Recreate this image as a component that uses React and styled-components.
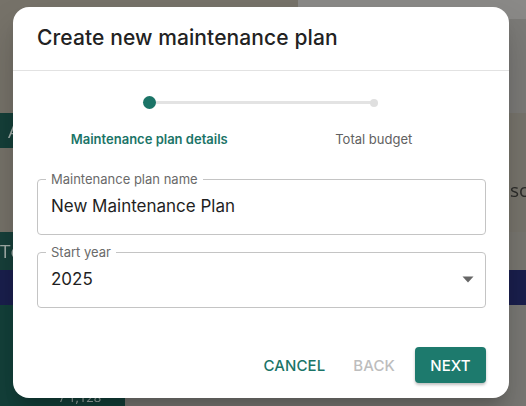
import React from "react";
import styled, { createGlobalStyle } from "styled-components";

const Global = createGlobalStyle`
  html, body { margin: 0; padding: 0; }
  body { width: 526px; height: 406px; overflow: hidden; font-family: Inter, "Noto Sans", sans-serif; }
`;

const Page = styled.div`
  position: relative;
  width: 526px;
  height: 406px;
  overflow: hidden;
  display: flex;
  flex-direction: column;
  background: #77746c;
`;

const Band = styled.div`
  height: ${(p) => p.$h}px;
  display: flex;
  align-items: center;
  background: ${(p) => p.$bg || "#77746c"};
  color: rgba(220, 220, 215, 0.75);
  font-family: "Open Sans", sans-serif;
  font-size: 19px;
  filter: blur(0.6px);
`;

const Block = styled.div`
  width: ${(p) => p.$w}px;
  height: 100%;
  background: ${(p) => p.$bg};
  display: flex;
  align-items: ${(p) => p.$align || "center"};
  justify-content: ${(p) => p.$justify || "flex-start"};
  padding-left: ${(p) => p.$pl || 0}px;
  box-sizing: border-box;
  color: ${(p) => p.$color || "rgba(220,220,215,0.7)"};
  font-size: ${(p) => p.$fs || 19}px;
  overflow: hidden;
  white-space: nowrap;
`;

const Fill = styled.div`
  flex: 1;
  height: 100%;
  background: ${(p) => p.$bg};
  display: flex;
  align-items: center;
  justify-content: ${(p) => p.$justify || "flex-start"};
  color: #2a2a28;
  font-size: 19px;
  overflow: hidden;
`;

const Dialog = styled.div`
  position: absolute;
  left: 13px;
  top: 7px;
  width: 496px;
  height: 391px;
  background: #fff;
  border-radius: 16px;
  box-shadow: 0 11px 15px -7px rgba(0,0,0,0.2), 0 24px 38px 3px rgba(0,0,0,0.14);
  display: flex;
  flex-direction: column;
  overflow: hidden;
`;

const Header = styled.div`
  height: 64px;
  box-sizing: border-box;
  border-bottom: 1px solid #e2e2e2;
  display: flex;
  align-items: center;
  padding: 0 24px;
`;

const Title = styled.h2`
  margin: 0;
  margin-top: -2px;
  font-size: 21px;
  font-weight: 500;
  color: #222;
  letter-spacing: 0.1px;
`;

const Body = styled.div`
  flex: 1;
  padding: 0 23px 0 24px;
  display: flex;
  flex-direction: column;
`;

const Stepper = styled.div`
  position: relative;
  display: grid;
  grid-template-columns: 1fr 1fr;
  margin-top: 25px;
`;

const Connector = styled.div`
  position: absolute;
  top: 5px;
  left: 25%;
  right: 25%;
  height: 3px;
  background: #e3e3e3;
  border-radius: 2px;
`;

const Step = styled.div`
  display: flex;
  flex-direction: column;
  align-items: center;
  position: relative;
`;

const DotWrap = styled.div`
  height: 13px;
  display: flex;
  align-items: center;
  justify-content: center;
`;

const Dot = styled.div`
  width: ${(p) => (p.$active ? 13 : 8)}px;
  height: ${(p) => (p.$active ? 13 : 8)}px;
  border-radius: 50%;
  background: ${(p) => (p.$active ? "#1b7467" : "#dfdfdf")};
`;

const StepLabel = styled.div`
  margin-top: 22px;
  font-size: 13px;
  font-weight: ${(p) => (p.$active ? 600 : 400)};
  color: ${(p) => (p.$active ? "#1b7467" : "#616161")};
`;

const Field = styled.fieldset`
  margin: ${(p) => p.$mt}px 0 0 0;
  padding: 0 13px;
  height: 63px;
  box-sizing: border-box;
  border: 1px solid #c4c4c4;
  border-radius: 4px;
  min-width: 0;
`;

const Legend = styled.legend`
  font-size: 13px;
  color: #6a6a6a;
  padding: 0 5px;
  margin-left: -5px;
  line-height: 14px;
`;

const FieldRow = styled.div`
  height: 40px;
  display: flex;
  align-items: center;
  justify-content: space-between;
`;

const Value = styled.div`
  font-size: 17px;
  color: #1f1f1f;
`;

const Caret = styled.svg`
  margin-right: -2px;
`;

const Actions = styled.div`
  margin-top: auto;
  padding: 0 23px 15px 0;
  display: flex;
  justify-content: flex-end;
  align-items: center;
  gap: 8px;
`;

const TextButton = styled.button`
  border: none;
  background: transparent;
  font-family: Inter, sans-serif;
  font-size: 15px;
  font-weight: 500;
  letter-spacing: 0.1px;
  color: ${(p) => (p.$disabled ? "#bdbdbd" : "#1b7467")};
  padding: 0 10px;
  height: 36px;
  cursor: pointer;
`;

const PrimaryButton = styled.button`
  border: none;
  background: #1d7a6d;
  color: #fff;
  font-family: Inter, sans-serif;
  font-size: 15px;
  font-weight: 500;
  letter-spacing: 0.1px;
  height: 36px;
  width: 71px;
  border-radius: 4px;
  box-shadow: 0 2px 3px rgba(0,0,0,0.25);
  margin-left: 2px;
`;

export default function App() {
  return (
    <>
      <Global />
      <Page>
        <Band $h={19}>
          <Block $w={298} $bg="#767269" />
          <Fill $bg="#8a8987" />
        </Band>
        <Band $h={94}>
          <Block $w={298} $bg="#767269" />
          <Fill $bg="#7b7a77" />
        </Band>
        <Band $h={35}>
          <Block $w={40} $bg="#153f39" $pl={8}>A</Block>
          <Fill $bg="#77746c" />
        </Band>
        <Band $h={84}>
          <Block $w={40} $bg="#767269" />
          <Fill $bg="#77746c" $justify="flex-end">
            <Block $w={16} $bg="transparent" $color="#2c2c2a">sc</Block>
          </Fill>
        </Band>
        <Band $h={38}>
          <Block $w={40} $bg="#173f3a" $pl={0}>To</Block>
          <Fill $bg="#787670" />
        </Band>
        <Band $h={35}>
          <Fill $bg="#1a1f4d" />
        </Band>
        <Band $h={101}>
          <Block $w={125} $bg="#13403a" $align="flex-end" $pl={60} $fs={13}>/ 1,128</Block>
          <Fill $bg="#797874" />
        </Band>
        <Dialog>
          <Header>
            <Title>Create new maintenance plan</Title>
          </Header>
          <Body>
            <Stepper>
              <Connector />
              <Step>
                <DotWrap><Dot $active /></DotWrap>
                <StepLabel $active>Maintenance plan details</StepLabel>
              </Step>
              <Step>
                <DotWrap><Dot /></DotWrap>
                <StepLabel>Total budget</StepLabel>
              </Step>
            </Stepper>
            <Field $mt={25}>
              <Legend>Maintenance plan name</Legend>
              <FieldRow>
                <Value>New Maintenance Plan</Value>
              </FieldRow>
            </Field>
            <Field $mt={10}>
              <Legend>Start year</Legend>
              <FieldRow>
                <Value>2025</Value>
                <Caret width="12" height="7" viewBox="0 0 12 7">
                  <path d="M0.5 0.5 L11.5 0.5 L6 6.5 Z" fill="#666" />
                </Caret>
              </FieldRow>
            </Field>
          </Body>
          <Actions>
            <TextButton>CANCEL</TextButton>
            <TextButton $disabled>BACK</TextButton>
            <PrimaryButton>NEXT</PrimaryButton>
          </Actions>
        </Dialog>
      </Page>
    </>
  );
}
